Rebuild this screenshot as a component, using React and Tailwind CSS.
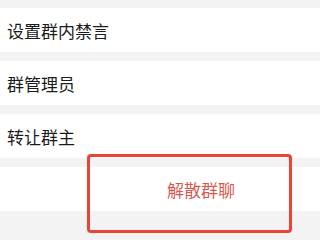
// 群设置列表底部：几行设置项 + 解散群聊按钮，外加红色标注框

const lignes = ['设置群内禁言', '群管理员', '转让群主'];

export default function App() {
  return (
    <div
      className="relative w-[320px] h-[240px] overflow-hidden bg-[#f3f3f3]"
      style={{ fontFamily: '"Noto Sans CJK SC", "Noto Sans", sans-serif' }}
    >
      <div className="w-[402px] pt-[8px] flex flex-col gap-[9px]">
        {lignes.map((texte) => (
          <div
            key={texte}
            className="h-[44px] bg-white flex items-center pl-[7px] text-[17px] text-[#1c1c1c]"
          >
            <span className="translate-y-[1px]">{texte}</span>
          </div>
        ))}
        <div className="h-[44px] bg-white flex items-center justify-center text-[17px] text-[#d65a51]">
          <span className="translate-y-[1px]">解散群聊</span>
        </div>
      </div>

      {/* cadre d'annotation rouge */}
      <div className="absolute left-[87px] top-[154px] w-[205px] h-[79px] border-[3px] border-[#ee4237] rounded-[4px]" />
    </div>
  );
}
